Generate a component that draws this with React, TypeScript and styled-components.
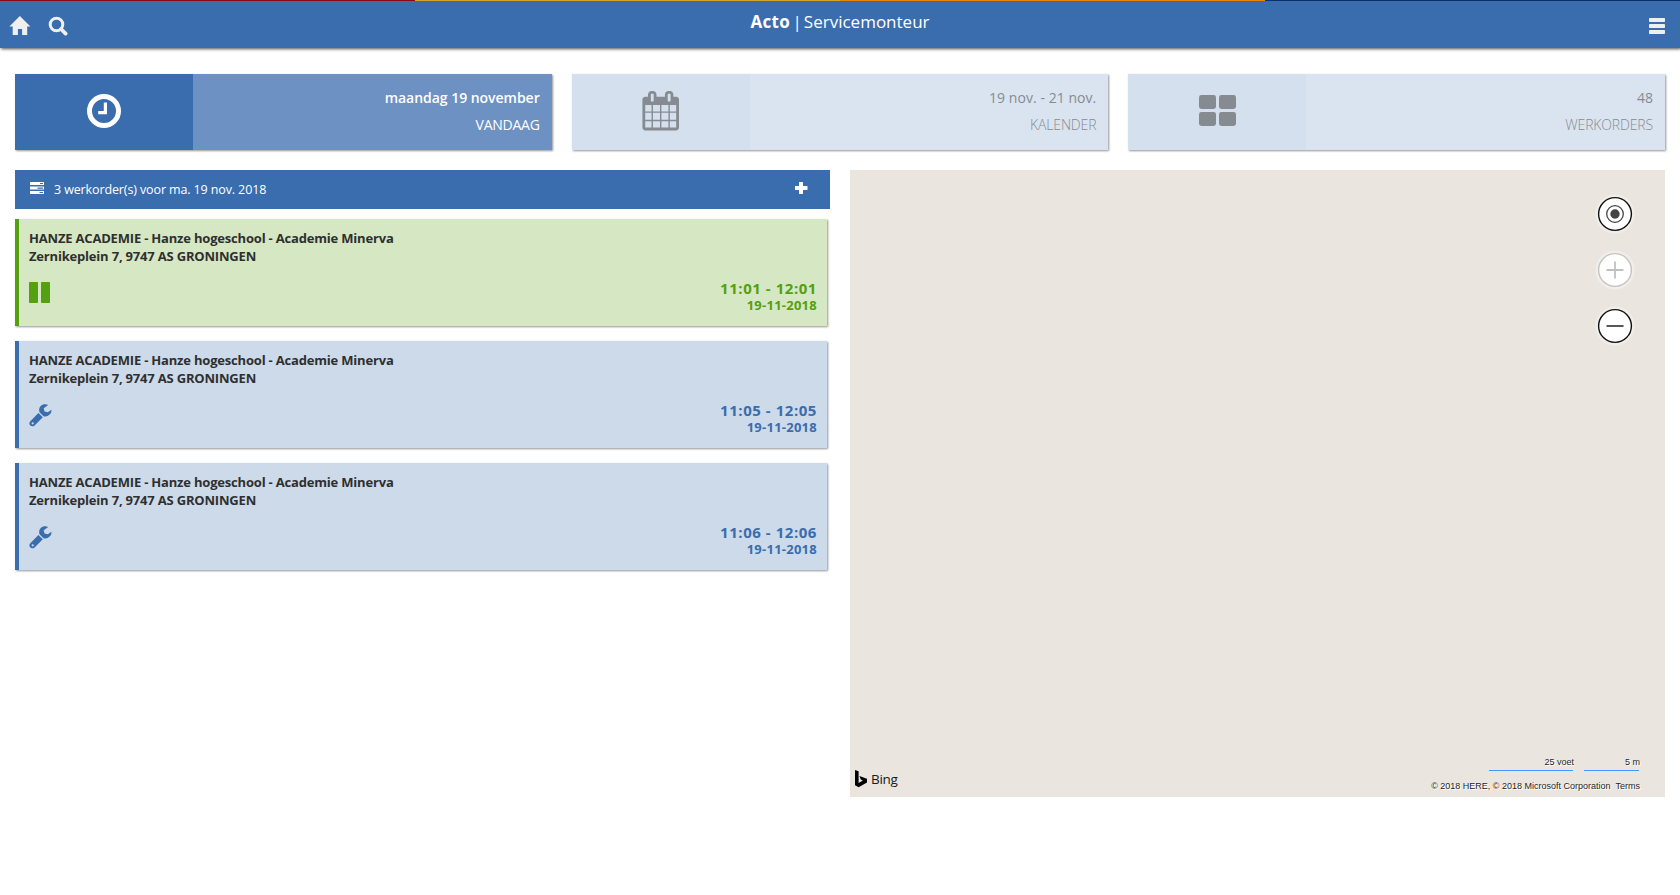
import React from 'react';
import styled, { createGlobalStyle, ThemeProvider } from 'styled-components';

const theme = {
  blue: '#3a6dae',
  blueSoft: '#6d91c3',
  paleIcon: '#d4e0ee',
  pale: '#dae4f0',
  muted: '#868b92',
  ink: '#2f2f2f',
  shadow: '1px 1px 2px rgba(0, 0, 0, 0.42)',
};

const GlobalStyle = createGlobalStyle`
  * { box-sizing: border-box; }
  body {
    margin: 0;
    background: #fff;
    color: ${theme.ink};
    font-family: 'Segoe UI', 'Open Sans', sans-serif;
  }
  svg { display: block; flex: none; }
`;

const Header = styled.header`
  height: 48px;
  background: ${(p) => p.theme.blue};
  box-shadow: 1px 1px 3px rgba(0, 0, 0, 0.7);
`;

const Stripes = styled.div`
  display: grid;
  grid-template-columns: 415px 425px 425px 1fr;
  height: 1px;
`;

const Stripe = styled.div<{ $color: string }>`
  background: ${(p) => p.$color};
`;

const HeaderBar = styled.div`
  display: grid;
  grid-template-columns: 1fr auto 1fr;
  height: 47px;
`;

const HeaderActions = styled.nav<{ $end?: boolean }>`
  display: flex;
  gap: 17px;
  padding: 15px ${(p) => (p.$end ? 15 : 9)}px 0 9px;
  justify-content: ${(p) => (p.$end ? 'flex-end' : 'flex-start')};
`;

const IconButton = styled.button`
  display: flex;
  align-items: flex-start;
  height: 22px;
  padding: 0;
  border: 0;
  background: none;
  color: #efefef;
`;

const Title = styled.h1`
  margin: 0;
  color: #fff;
  font-size: 17px;
  font-weight: 400;
  line-height: 41px;
  white-space: pre;
`;

const TitleBrand = styled.b`
  letter-spacing: 0.3px;
`;

const TitleDivider = styled.span`
  margin: 0 -2.4px 0 -2px;
`;

const Main = styled.main`
  display: flex;
  flex-direction: column;
  gap: 20px;
  padding: 26px 15px 0;
`;

const Tiles = styled.div`
  display: grid;
  grid-template-columns: repeat(3, 1fr);
  gap: 20px;
`;

const Tile = styled.section<{ $active?: boolean }>`
  display: grid;
  grid-template-columns: 178px 1fr;
  height: 76px;
  background: ${(p) => (p.$active ? p.theme.blueSoft : p.theme.pale)};
  color: ${(p) => (p.$active ? '#fff' : p.theme.muted)};
  box-shadow: ${(p) => p.theme.shadow};
`;

const TileIcon = styled.div<{ $active?: boolean; $top: number }>`
  display: flex;
  justify-content: center;
  align-items: flex-start;
  padding-top: ${(p) => p.$top}px;
  background: ${(p) => (p.$active ? p.theme.blue : p.theme.paleIcon)};
`;

const TileText = styled.div`
  padding: 10px 12px 0 0;
  text-align: right;
  font-size: 14px;
  line-height: 27px;
`;

const TileValue = styled.div<{ $active?: boolean }>`
  font-weight: ${(p) => (p.$active ? 600 : 500)};
  letter-spacing: ${(p) => (p.$active ? '-0.03px' : '0.05px')};
`;

const TileLabel = styled.div<{ $active?: boolean }>`
  font-weight: ${(p) => (p.$active ? 400 : 300)};
  letter-spacing: ${(p) => (p.$active ? '-0.25px' : '-0.15px')};
`;

const Columns = styled.div`
  display: grid;
  grid-template-columns: 1fr 1fr;
  gap: 20px;
  align-items: start;
`;

const ListHeader = styled.div`
  display: flex;
  align-items: center;
  height: 39px;
  padding: 0 22px 0 15px;
  background: ${(p) => p.theme.blue};
  color: #fff;
`;

const ListTitle = styled.h2`
  flex: 1;
  margin: 0 0 0 10px;
  font-size: 12.5px;
  font-weight: 400;
  letter-spacing: -0.12px;
`;

const HeaderGlyph = styled.span`
  padding-bottom: 3px;
`;

const Orders = styled.div`
  display: flex;
  flex-direction: column;
  gap: 15px;
  padding: 10px 3px 0 0;
`;

const Order = styled.article<{ $paused?: boolean }>`
  height: 107px;
  padding: 10px 10px 0;
  border-left: 4px solid ${(p) => (p.$paused ? '#54a010' : p.theme.blue)};
  background: ${(p) => (p.$paused ? '#d6e7c4' : '#cddaea')};
  color: ${(p) => (p.$paused ? '#54a010' : p.theme.blue)};
  box-shadow: ${(p) => p.theme.shadow};
`;

const OrderLine = styled.div`
  color: ${(p) => p.theme.ink};
  font-size: 13px;
  font-weight: 700;
  line-height: 18px;
  letter-spacing: -0.19px;
`;

const OrderFooter = styled.div`
  display: flex;
  justify-content: space-between;
  align-items: flex-start;
  padding-top: 14px;
`;

const OrderStatus = styled.div`
  padding-top: 3px;
`;

const OrderWhen = styled.div`
  text-align: right;
  font-weight: 700;
`;

const OrderTime = styled.div`
  font-size: 15px;
  line-height: 18px;
  letter-spacing: 0.55px;
`;

const OrderDate = styled.div`
  font-size: 13px;
  line-height: 16px;
  letter-spacing: 0.25px;
`;

const Map = styled.section`
  display: flex;
  flex-direction: column;
  justify-content: space-between;
  height: 627px;
  background: #eae5df;
`;

const MapControls = styled.div`
  display: flex;
  flex-direction: column;
  align-items: flex-end;
  gap: 16px;
  padding: 24px 30px 0 0;
`;

const MapFooter = styled.footer`
  display: flex;
  justify-content: space-between;
  align-items: flex-end;
  padding: 0 25px 4px 5px;
`;

const BingLogo = styled.div`
  display: flex;
  align-items: center;
  gap: 3px;
  height: 28px;
  color: #1a1a1a;
  font-size: 13.5px;
  letter-spacing: -0.3px;
`;

const MapInfo = styled.div`
  padding-bottom: 1px;
  color: #222;
  font-family: Arial, 'Liberation Sans', sans-serif;
  font-size: 9px;
  line-height: 12px;
  text-shadow: 1px 1px 0 #fff, 0 0 1px #fff;
`;

const Scales = styled.div`
  display: flex;
  justify-content: flex-end;
  gap: 11px;
  padding: 0 1px 9px 0;
`;

const Scale = styled.div<{ $width: number }>`
  display: flex;
  justify-content: flex-end;
  width: ${(p) => p.$width}px;
  height: 15px;
  border-bottom: 1px solid #3f9bff;
  box-shadow: 0 0 0 1px #eae5df, 1px 1px 0 #fff;
  white-space: nowrap;
`;

const ScaleLabel = styled.span`
  margin-right: -1px;
`;

const Copyright = styled.div`
  display: flex;
  justify-content: flex-end;
  gap: 5px;
`;

const HomeIcon = () => (
  <svg width="22" height="20" viewBox="0 0 22 20" fill="currentColor">
    <path d="M10.9 0 21.4 10.4h-3.2V19h-5.1v-6H8.9v6H3.7v-8.6H.4z" />
  </svg>
);

const SearchIcon = () => (
  <svg width="20" height="20" viewBox="0 0 20 20" fill="none" stroke="currentColor">
    <circle cx="8.500" cy="8.500" r="6.300" strokeWidth="3" />
    <path d="m13 13 4.600 4.600" strokeWidth="3.800" strokeLinecap="round" />
  </svg>
);

const MenuIcon = () => (
  <svg width="16" height="18" viewBox="0 0 16 18" fill="currentColor">
    <rect y="2" width="16" height="4" rx=".8" />
    <rect y="8" width="16" height="4" rx=".8" />
    <rect y="14" width="16" height="4" rx=".8" />
  </svg>
);

const ClockIcon = () => (
  <svg width="34" height="34" viewBox="0 0 34 34" fill="none" stroke="currentColor">
    <circle cx="17" cy="17" r="14.5" strokeWidth="5" />
    <path d="M18.4 8.5v10.2h-7.2" strokeWidth="3.2" />
  </svg>
);

const CalendarIcon = () => (
  <svg width="39.4" height="39.4" viewBox="0 0 1792 1792" fill="currentColor">
    <path d="M192 1664h288v-288h-288v288zm352 0h320v-288h-320v288zm-352-352h288v-320h-288v320zm352 0h320v-320h-320v320zm-352-384h288v-288h-288v288zm736 736h320v-288h-320v288zm-384-736h320v-288h-320v288zm768 736h288v-288h-288v288zm-384-352h320v-320h-320v320zm-352-864v-288q0-13-9.5-22.5t-22.5-9.5h-64q-13 0-22.5 9.5t-9.5 22.5v288q0 13 9.5 22.5t22.5 9.5h64q13 0 22.5-9.5t9.5-22.5zm736 864h288v-320h-288v320zm-384-384h320v-288h-320v288zm384 0h288v-288h-288v288zm32-480v-288q0-13-9.5-22.5t-22.5-9.5h-64q-13 0-22.5 9.5t-9.5 22.5v288q0 13 9.5 22.5t22.5 9.5h64q13 0 22.5-9.5t9.5-22.5zm384-64v1280q0 52-38 90t-90 38h-1408q-52 0-90-38t-38-90v-1280q0-52 38-90t90-38h128v-96q0-66 47-113t113-47h64q66 0 113 47t47 113v96h384v-96q0-66 47-113t113-47h64q66 0 113 47t47 113v96h128q52 0 90 38t38 90z" />
  </svg>
);

const GridIcon = () => (
  <svg width="37" height="31" viewBox="0 0 37 31" fill="currentColor">
    <rect width="17" height="14" rx="2.4" />
    <rect x="20" width="17" height="14" rx="2.4" />
    <rect y="17" width="17" height="14" rx="2.4" />
    <rect x="20" y="17" width="17" height="14" rx="2.4" />
  </svg>
);

const TasksIcon = () => (
  <svg width="14" height="12" viewBox="0 0 14 12" fill="currentColor" fillRule="evenodd">
    <path d="M.5 0h13l.5.5V3H0V.5zM10 .9h3v1h-3z" />
    <path d="M0 4.5h14v3.1H0zM7.5 5.4v1.3H13V5.4z" />
    <path d="M0 9h14v2.500l-.5.5H.5l-.5-.5zM9.500 9.900v1.200H13V9.900z" />
  </svg>
);

const PlusIcon = () => (
  <svg width="13" height="12" viewBox="0 0 13 12" fill="currentColor">
    <path d="M4 0h4v4h4.500v4H8v4H4V8H0V4h4z" />
  </svg>
);

const PauseIcon = () => (
  <svg width="22" height="21" viewBox="0 0 22 21" fill="currentColor">
    <rect width="9" height="21" rx=".8" />
    <rect x="12" width="9" height="21" rx=".8" />
  </svg>
);

const WrenchIcon = () => (
  <svg width="23" height="23" viewBox="0 0 23 23" fill="currentColor" fillRule="evenodd">
    <path d="M19.2 1.100C16.900-.3 13.600 0 11.700 2.100c-1.600 1.700-1.900 4-1.200 6.100l4 4c2.200.6 4.400.1 6.100-1.600 1.400-1.400 2-3 1.800-4.900l-3.600 2.600-3.300-.9-.8-3.200z" />
    <path d="M9.400 8.900 13.800 13.300 5.600 21.400c-1.200 1.200-3.100 1.200-4.300.1-1.200-1.200-1.200-3.100 0-4.300zM3.700 18.200a1.100 1.100 0 1 0 0 2.200 1.100 1.100 0 0 0 0-2.200z" />
  </svg>
);

const BingIcon = () => (
  <svg width="13" height="18" viewBox="0 0 13 18" fill="#000">
    <path d="M0 0l3.600 1.300v11.800l4.300-2.500-2.100-1-1.400-3.500L12 8.700v3.700L3.600 17.200 0 15.200z" />
  </svg>
);

type ControlKind = 'locate' | 'in' | 'out';

const MapControl = ({ kind }: { kind: ControlKind }) => {
  const ring = kind === 'in' ? '#c4c4c4' : '#111';
  const mark = kind === 'in' ? '#c0c0c0' : '#444';
  return (
    <svg width="40" height="40" viewBox="0 0 40 40" fill="none">
      <circle cx="20" cy="20" r="19.5" fill="#fff" fillOpacity=".35" />
      <circle cx="20" cy="20" r="16.4" fill="#fff" stroke={ring} strokeWidth="1.4" />
      {kind === 'locate' ? (
        <>
          <circle cx="20" cy="20" r="8.3" stroke={mark} strokeWidth="1.3" />
          <circle cx="20" cy="20" r="4.7" fill={mark} />
        </>
      ) : (
        <path d={kind === 'in' ? 'M11.5 20h17M20 11.5v17' : 'M11.5 20h17'} stroke={mark} strokeWidth="1.8" />
      )}
    </svg>
  );
};

const tiles = [
  { value: 'maandag 19 november', label: 'VANDAAG', icon: <ClockIcon />, top: 20, active: true },
  { value: '19 nov. - 21 nov.', label: 'KALENDER', icon: <CalendarIcon />, top: 17.3, active: false },
  { value: '48', label: 'WERKORDERS', icon: <GridIcon />, top: 20.5, active: false },
];

const orders = [
  { time: '11:01 - 12:01', paused: true },
  { time: '11:05 - 12:05', paused: false },
  { time: '11:06 - 12:06', paused: false },
];

export default function App() {
  return (
    <ThemeProvider theme={theme}>
      <GlobalStyle />
      <Header>
        <Stripes>
          <Stripe $color="#8b0a14" />
          <Stripe $color="#cfa52c" />
          <Stripe $color="#ec820a" />
          <Stripe $color="#0b306c" />
        </Stripes>
        <HeaderBar>
          <HeaderActions>
            <IconButton aria-label="Home"><HomeIcon /></IconButton>
            <IconButton aria-label="Zoeken"><SearchIcon /></IconButton>
          </HeaderActions>
          <Title>
            <TitleBrand>Acto</TitleBrand> <TitleDivider>|</TitleDivider> Servicemonteur
          </Title>
          <HeaderActions $end>
            <IconButton aria-label="Menu"><MenuIcon /></IconButton>
          </HeaderActions>
        </HeaderBar>
      </Header>
      <Main>
        <Tiles>
          {tiles.map((t) => (
            <Tile key={t.label} $active={t.active}>
              <TileIcon $active={t.active} $top={t.top}>{t.icon}</TileIcon>
              <TileText>
                <TileValue $active={t.active}>{t.value}</TileValue>
                <TileLabel $active={t.active}>{t.label}</TileLabel>
              </TileText>
            </Tile>
          ))}
        </Tiles>
        <Columns>
          <section>
            <ListHeader>
              <HeaderGlyph><TasksIcon /></HeaderGlyph>
              <ListTitle>3 werkorder(s) voor ma. 19 nov. 2018</ListTitle>
              <HeaderGlyph><PlusIcon /></HeaderGlyph>
            </ListHeader>
            <Orders>
              {orders.map((o) => (
                <Order key={o.time} $paused={o.paused}>
                  <OrderLine>HANZE ACADEMIE - Hanze hogeschool - Academie Minerva</OrderLine>
                  <OrderLine>Zernikeplein 7, 9747 AS GRONINGEN</OrderLine>
                  <OrderFooter>
                    <OrderStatus>{o.paused ? <PauseIcon /> : <WrenchIcon />}</OrderStatus>
                    <OrderWhen>
                      <OrderTime>{o.time}</OrderTime>
                      <OrderDate>19-11-2018</OrderDate>
                    </OrderWhen>
                  </OrderFooter>
                </Order>
              ))}
            </Orders>
          </section>
          <Map>
            <MapControls>
              <MapControl kind="locate" />
              <MapControl kind="in" />
              <MapControl kind="out" />
            </MapControls>
            <MapFooter>
              <BingLogo><BingIcon />Bing</BingLogo>
              <MapInfo>
                <Scales>
                  <Scale $width={84}><ScaleLabel>25 voet</ScaleLabel></Scale>
                  <Scale $width={55}><ScaleLabel>5 m</ScaleLabel></Scale>
                </Scales>
                <Copyright>
                  <span>© 2018 HERE, © 2018 Microsoft Corporation</span>
                  <span>Terms</span>
                </Copyright>
              </MapInfo>
            </MapFooter>
          </Map>
        </Columns>
      </Main>
    </ThemeProvider>
  );
}
